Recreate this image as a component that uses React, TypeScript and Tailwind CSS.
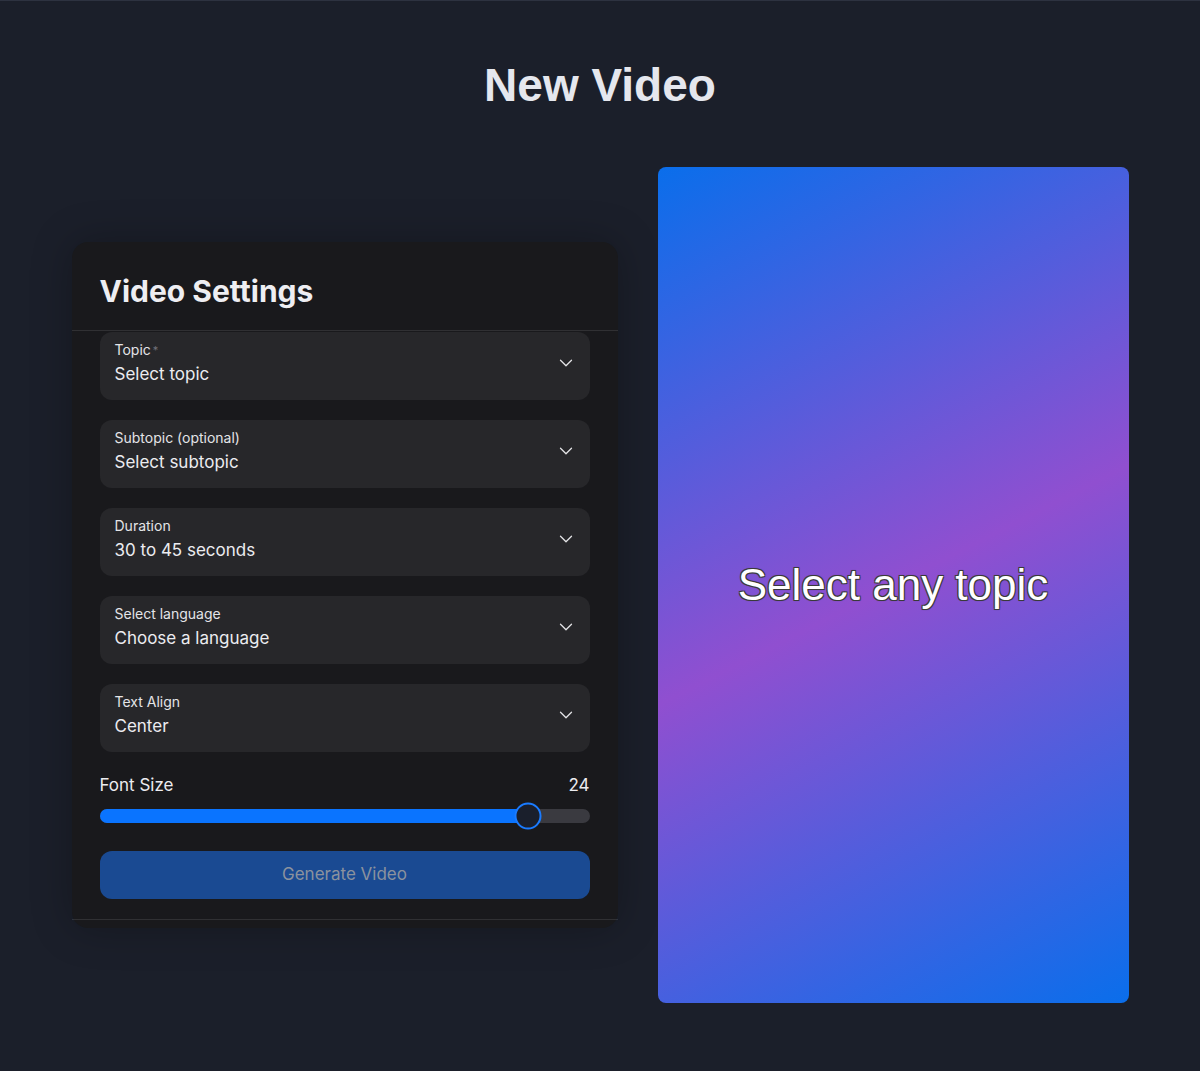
import { ChevronDown } from "lucide-react";

const fields = [
  { label: "Topic", required: true, value: "Select topic" },
  { label: "Subtopic (optional)", value: "Select subtopic" },
  { label: "Duration", value: "30 to 45 seconds" },
  { label: "Select language", value: "Choose a language" },
  { label: "Text Align", value: "Center" },
];

function SelectField({ label, value, required }: { label: string; value: string; required?: boolean }) {
  return (
    <div className="relative h-[68px] rounded-xl bg-[#27272a] px-[15px] pt-2">
      <div className="text-[14px] leading-5 text-[#e4e4e7]">
        {label}
        {required && <span className="ml-0.5 text-[11px] align-top text-[#71717a]">*</span>}
      </div>
      <div className="mt-[1px] text-[17px] leading-[26px] text-[#ececf0]">{value}</div>
      <ChevronDown className="absolute right-[13px] top-[20px] h-[22px] w-[22px] text-[#e4e4e7]" strokeWidth={1.4} />
    </div>
  );
}

export default function App() {
  const fontSize = 24;
  const pct = 87.5;

  return (
    <div className="min-h-screen bg-[#1b1f2a] font-['Inter',sans-serif] border-t border-[#2d3240]">
      <h1 className="pt-[56px] text-center font-['Liberation_Sans',Arial,sans-serif] text-[46px] font-bold leading-[56px] text-[#e5e7ee]">
        New Video
      </h1>

      <div className="mt-[54px] flex items-center justify-center gap-10">
        {/* Settings card */}
        <div className="w-[546px] rounded-2xl bg-[#19191c] shadow-[0_0_40px_rgba(0,0,0,0.25)]">
          <div className="border-b border-white/10 px-7 pt-[31px] pb-[21px]">
            <h2 className="text-[30px] font-bold leading-9 text-[#eeeef2]">Video Settings</h2>
          </div>

          <div className="flex flex-col gap-5 px-7 pt-[1px]">
            {fields.map((f) => (
              <SelectField key={f.label} {...f} />
            ))}
          </div>

          <div className="px-7 pt-[21px]">
            <div className="flex items-center justify-between text-[17px] leading-6 text-[#ececf0]">
              <span>Font Size</span>
              <span>{fontSize}</span>
            </div>
            <div className="relative mt-[12px] h-[14px] rounded-full bg-[#3a3a40]">
              <div className="h-full rounded-full bg-[#0a74ff]" style={{ width: `${pct}%` }} />
              <div
                className="absolute top-1/2 h-[27px] w-[27px] -translate-x-1/2 -translate-y-1/2 rounded-full border-2 border-[#1a7bff] bg-[#1a1f2c]"
                style={{ left: `${pct}%` }}
              />
            </div>
            <button className="mt-[28px] h-[48px] w-full rounded-xl bg-[#1a4a92] text-[17px] text-[#8b929e]">
              Generate Video
            </button>
          </div>
          <div className="mt-[20px] border-b border-white/10" />
          <div className="h-2" />
        </div>

        {/* Preview */}
        <div className="flex h-[836px] w-[471px] items-center justify-center rounded-lg bg-[linear-gradient(153deg,#0a6eeb_0%,#904fd0_50%,#0a6eeb_100%)]">
          <span className="font-['Liberation_Sans',Arial,sans-serif] text-[44px] leading-none text-white [text-shadow:-1px_-1px_0_#3a3a3a,1px_-1px_0_#3a3a3a,-1px_1px_0_#3a3a3a,1px_1px_0_#3a3a3a,0_0_2px_#333]">
            Select any topic
          </span>
        </div>
      </div>
    </div>
  );
}
